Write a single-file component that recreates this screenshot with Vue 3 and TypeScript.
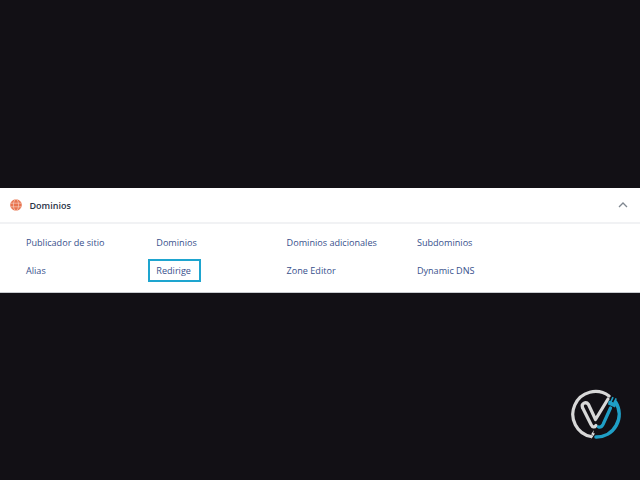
<script setup lang="ts">
const links: string[] = [
  'Publicador de sitio', 'Dominios', 'Dominios adicionales', 'Subdominios',
  'Alias', 'Redirige', 'Zone Editor', 'Dynamic DNS',
]
</script>

<template>
  <div class="page">
    <section class="panel">
      <header class="head">
        <svg class="globe" width="12" height="12" viewBox="0 0 12 12">
          <circle cx="6" cy="6" r="5.8" fill="#e8744f" />
          <g fill="none" stroke="#f8cdbd" stroke-width=".7">
            <ellipse cx="6" cy="6" rx="2.6" ry="5.6" />
            <path d="M.8 4.2h10.4M.8 7.8h10.4" />
          </g>
        </svg>
        <span class="title">Dominios</span>
        <svg class="chev" width="10" height="6" viewBox="0 0 10 6">
          <path d="M1 5l4-4 4 4" fill="none" stroke="#7f8790" stroke-width="1.3" />
        </svg>
      </header>
      <div class="grid">
        <div v-for="l in links" :key="l" class="cell">
          <a class="link" :class="{ focus: l === 'Redirige' }">{{ l }}</a>
        </div>
      </div>
    </section>
    <svg class="logo" width="54" height="54" viewBox="0 0 54 54">
      <g fill="none" stroke-linecap="round" stroke-linejoin="round">
        <path d="M21 48.500A22.700 22.700 0 1 1 39 8" stroke="#d8d8d8" stroke-width="3.200" />
        <path d="M26 49A22.700 22.700 0 0 0 45.500 14" stroke="#1f9fc6" stroke-width="3.600" />
        <path d="M12.500 19.500C11 15.500 16 13 18.500 16.500L25.500 31.500L38 11" stroke="#d8d8d8" stroke-width="3.200" />
        <path d="M12.500 19.500L21 36.500c1.500 3 3.500 3.200 5 1" stroke="#d8d8d8" stroke-width="3.200" />
        <path d="M28.500 39c2 .5 3.500-.5 4.500-2.500L40.500 20" stroke="#1f9fc6" stroke-width="3.200" />
      </g>
      <path d="M38 16.500l7 3 1.500-3.500-1.600-.8 2-4.400-1.500-.7-2 4.400-1.600-.7 2-4.400-1.500-.7-2 4.400-1.600-.7z" fill="#1f9fc6" />
      <path d="M24 42l-3 4.500 1.800.3-2.300 5 4.500-6.200-1.800-.3z" fill="#e8e8e8" />
    </svg>
  </div>
</template>

<style scoped>
.page {
  position: relative;
  box-sizing: border-box;
  width: 640px;
  height: 480px;
  padding-top: 188px;
  background: #121015;
  font-family: "Open Sans", sans-serif;
}
.panel {
  height: 105px;
  box-sizing: border-box;
  background: #fff;
  border-bottom: 1px solid #c9ccd0;
}
.head {
  display: flex;
  align-items: center;
  height: 34px;
  padding: 0 12px 0 10px;
  border-bottom: 2px solid #f1f2f4;
}
.title {
  margin-left: 7.500px;
  font-size: 9px;
  font-weight: 600;
  color: #2a3346;
}
.chev {
  margin-left: auto;
}
.grid {
  display: grid;
  grid-template-columns: repeat(4, 130.3px);
  grid-auto-rows: 28px;
  padding: 4px 0 0 26px;
}
.cell {
  display: flex;
  align-items: center;
}
.link {
  font-size: 9.100px;
  color: #37508c;
  white-space: nowrap;
}
.focus {
  margin-left: -8px;
  padding: 3px 8px 3px 6px;
  line-height: 13px;
  border: 2px solid #1ea5cf;
}
.logo {
  position: absolute;
  left: 570px;
  top: 388px;
}
</style>
